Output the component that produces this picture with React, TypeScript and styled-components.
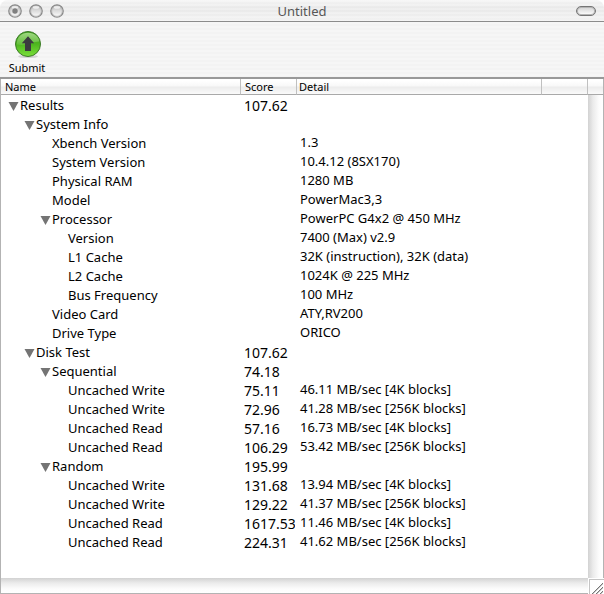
import React, { useState } from "react";
import styled, { createGlobalStyle } from "styled-components";

const GlobalStyle = createGlobalStyle`
  * { box-sizing: border-box; }
  html, body { margin: 0; background: #fff; }
  body, button { font-family: "Noto Sans", "Open Sans", sans-serif; color: #000; }
`;

const Window = styled.main`
  display: flex;
  flex-direction: column;
  min-height: 100vh;
  overflow: hidden;
  border-radius: 8px 8px 0 0;
  background: #fff;
`;

const TitleBar = styled.header`
  display: grid;
  grid-template-columns: 80px 1fr 80px;
  align-items: center;
  height: 22px;
  padding: 0 8px;
  border-bottom: 1px solid #8c8c8c;
  background:
    repeating-linear-gradient(rgba(255, 255, 255, 0.25) 0 2px, transparent 2px 4px),
    linear-gradient(#f4f4f4, #e9e9e9 40%, #f2f2f2);
`;

const Title = styled.h1`
  margin: 0;
  font-size: 13px;
  line-height: 20px;
  font-weight: 400;
  text-align: center;
  color: #575757;
`;

const Lights = styled.div`
  display: flex;
  gap: 7px;
`;

const Light = styled.button`
  width: 14px;
  height: 14px;
  padding: 0;
  border: 0;
  background: none;
  svg { display: block; }
`;

const ToolbarToggle = styled.button`
  justify-self: end;
  width: 20px;
  height: 10px;
  padding: 0;
  border: 1px solid #757575;
  border-radius: 5px;
  background: linear-gradient(#d2d2d2, #fff);
  box-shadow: inset 0 0 0 1px #b5b5b5;
`;

const Toolbar = styled.div`
  display: flex;
  height: 57px;
  padding: 6px 8px 0;
  border-bottom: 2px solid #999;
  background: repeating-linear-gradient(#f6f6f6 0 2px, #f3f3f3 2px 4px);
`;

const SubmitButton = styled.button`
  display: flex;
  flex-direction: column;
  align-items: center;
  width: 38px;
  padding: 0;
  border: 0;
  background: none;
  font-size: 11px;
  line-height: 16px;
  svg { display: block; }
`;

const Content = styled.div`
  display: grid;
  flex: 1;
  grid-template-columns: minmax(0, 1fr) 16px;
  grid-template-rows: 16px 1fr 16px;
  border-left: 1px solid #b3b3b3;
`;

const TableArea = styled.div`
  grid-row: 1 / 3;
`;

const ResultsTable = styled.table`
  width: 100%;
  table-layout: fixed;
  border-collapse: separate;
  border-spacing: 0;
`;

const Column = styled.col<{ $width?: number }>`
  width: ${(p) => (p.$width ? `${p.$width}px` : "auto")};
`;

const headerFill = "linear-gradient(#fff 0 2px, #f8f8f8 7px, #ececec 8px, #fafafa)";

const HeadCell = styled.th<{ $inset?: number }>`
  height: 16px;
  padding: 0 0 0 ${(p) => p.$inset ?? 2}px;
  border-right: 1px solid #c0c0c0;
  border-bottom: 1px solid #a9a9a9;
  background: ${headerFill};
  font-size: 11px;
  line-height: 15px;
  font-weight: 400;
  text-align: left;
`;

const HeadCap = styled.div`
  border-right: 1px solid #b3b3b3;
  border-bottom: 1px solid #a9a9a9;
  background: ${headerFill};
`;

const NameCell = styled.td<{ $depth: number }>`
  height: 19px;
  padding: 2px 0 0 ${(p) => 7 + p.$depth * 16}px;
  font-size: 13px;
  line-height: 17px;
  white-space: nowrap;
`;

const NameLabel = styled.div`
  display: grid;
  grid-template-columns: 12px 1fr;
  align-items: center;
`;

const Disclosure = styled.button<{ $open: boolean }>`
  grid-column: 1;
  display: block;
  width: 12px;
  height: 12px;
  padding: 0;
  border: 0;
  background: none;
  transform: ${(p) => (p.$open ? "none" : "rotate(-90deg)")};
  svg { display: block; }
`;

const NameText = styled.span`
  grid-column: 2;
`;

const ScoreCell = styled.td`
  padding: 2px 2px 0 3px;
  font-size: 14px;
  line-height: 17px;
  white-space: nowrap;
`;

const ScoreText = styled.div`
  overflow: hidden;
`;

const DetailCell = styled.td`
  padding: 0 0 0 3px;
  font-size: 13px;
  line-height: 19px;
  white-space: nowrap;
`;

const VerticalTrack = styled.div`
  border-right: 1px solid #b3b3b3;
  background: linear-gradient(to right, #d2d2d2, #ebebeb 5px, #fcfcfc 11px, #fff);
`;

const HorizontalTrack = styled.div`
  border-bottom: 1px solid #b3b3b3;
  background: linear-gradient(#d2d2d2, #ebebeb 5px, #fcfcfc 11px, #fff);
`;

const ResizeCorner = styled.div`
  margin: 1px 0 0 1px;
  border-top: 1px solid #c4c4c4;
  border-left: 1px solid #c4c4c4;
  background: #fff;
  svg { display: block; }
`;

type Entry = { depth: number; name: string; score?: string; detail?: string; group?: boolean };

const entries: Entry[] = [
  { depth: 0, name: "Results", score: "107.62", group: true },
  { depth: 1, name: "System Info", group: true },
  { depth: 2, name: "Xbench Version", detail: "1.3" },
  { depth: 2, name: "System Version", detail: "10.4.12 (8SX170)" },
  { depth: 2, name: "Physical RAM", detail: "1280 MB" },
  { depth: 2, name: "Model", detail: "PowerMac3,3" },
  { depth: 2, name: "Processor", detail: "PowerPC G4x2 @ 450 MHz", group: true },
  { depth: 3, name: "Version", detail: "7400 (Max) v2.9" },
  { depth: 3, name: "L1 Cache", detail: "32K (instruction), 32K (data)" },
  { depth: 3, name: "L2 Cache", detail: "1024K @ 225 MHz" },
  { depth: 3, name: "Bus Frequency", detail: "100 MHz" },
  { depth: 2, name: "Video Card", detail: "ATY,RV200" },
  { depth: 2, name: "Drive Type", detail: "ORICO" },
  { depth: 1, name: "Disk Test", score: "107.62", group: true },
  { depth: 2, name: "Sequential", score: "74.18", group: true },
  { depth: 3, name: "Uncached Write", score: "75.11", detail: "46.11 MB/sec [4K blocks]" },
  { depth: 3, name: "Uncached Write", score: "72.96", detail: "41.28 MB/sec [256K blocks]" },
  { depth: 3, name: "Uncached Read", score: "57.16", detail: "16.73 MB/sec [4K blocks]" },
  { depth: 3, name: "Uncached Read", score: "106.29", detail: "53.42 MB/sec [256K blocks]" },
  { depth: 2, name: "Random", score: "195.99", group: true },
  { depth: 3, name: "Uncached Write", score: "131.68", detail: "13.94 MB/sec [4K blocks]" },
  { depth: 3, name: "Uncached Write", score: "129.22", detail: "41.37 MB/sec [256K blocks]" },
  { depth: 3, name: "Uncached Read", score: "1617.53", detail: "11.46 MB/sec [4K blocks]" },
  { depth: 3, name: "Uncached Read", score: "224.31", detail: "41.62 MB/sec [256K blocks]" },
];

function LightIcon({ dot }: { dot?: boolean }) {
  return (
    <svg width="14" height="14" viewBox="0 0 14 14" aria-hidden="true">
      <defs>
        <linearGradient id="lightFill" x1="0" y1="0" x2="0" y2="1">
          <stop offset="0" stopColor="#a8a8a8" />
          <stop offset="0.4" stopColor="#d6d6d6" />
          <stop offset="1" stopColor="#fff" />
        </linearGradient>
      </defs>
      <circle cx="7" cy="7" r="6.2" fill="url(#lightFill)" stroke="#8a8a8a" strokeWidth="1.3" />
      <circle cx="7" cy="7" r="5.2" fill="none" stroke="#b4b4b4" strokeWidth="0.8" opacity="0.7" />
      <ellipse cx="7" cy="3.4" rx="3.2" ry="1.4" fill="#fff" opacity="0.7" />
      {dot && <circle cx="7" cy="7" r="2.7" fill="#808080" />}
    </svg>
  );
}

function SubmitIcon() {
  return (
    <svg width="32" height="32" viewBox="0 0 32 32" aria-hidden="true">
      <defs>
        <linearGradient id="green" x1="0" y1="0" x2="0" y2="1">
          <stop offset="0" stopColor="#3f9f1c" />
          <stop offset="0.5" stopColor="#4db51f" />
          <stop offset="1" stopColor="#7be03a" />
        </linearGradient>
        <linearGradient id="gloss" x1="0" y1="0" x2="0" y2="1">
          <stop offset="0" stopColor="#b5e59a" />
          <stop offset="1" stopColor="#67bd3f" />
        </linearGradient>
      </defs>
      <ellipse cx="17" cy="28.5" rx="10" ry="1.6" fill="#000" opacity="0.13" />
      <circle cx="17" cy="16" r="12.5" fill="url(#green)" stroke="#3c7a28" strokeWidth="1" />
      <path d="M5.8 16.5C5.8 9 10.5 4.8 17 4.8S28.2 9 28.2 13.5C22 13.5 15 18.5 5.8 16.5Z" fill="url(#gloss)" opacity="0.8" />
      <path d="M17 8.2L23.2 15.2H20V23H14V15.2H10.8Z" fill="#3b3b3f" />
    </svg>
  );
}

function visibleEntries(closed: Set<number>) {
  let hiddenBelow = Infinity;
  return entries
    .map((entry, index) => ({ entry, index }))
    .filter(({ entry, index }) => {
      if (entry.depth > hiddenBelow) return false;
      hiddenBelow = closed.has(index) ? entry.depth : Infinity;
      return true;
    });
}

export default function App() {
  const [closed, setClosed] = useState<Set<number>>(new Set());

  const toggle = (index: number) =>
    setClosed((previous) => {
      const next = new Set(previous);
      if (!next.delete(index)) next.add(index);
      return next;
    });

  return (
    <>
      <GlobalStyle />
      <Window>
        <TitleBar>
          <Lights>
            <Light aria-label="Close"><LightIcon dot /></Light>
            <Light aria-label="Minimize"><LightIcon /></Light>
            <Light aria-label="Zoom"><LightIcon /></Light>
          </Lights>
          <Title>Untitled</Title>
          <ToolbarToggle aria-label="Toggle toolbar" />
        </TitleBar>
        <Toolbar>
          <SubmitButton>
            <SubmitIcon />
            Submit
          </SubmitButton>
        </Toolbar>
        <Content>
          <TableArea>
            <ResultsTable>
              <colgroup>
                <Column $width={240} />
                <Column $width={56} />
                <Column />
                <Column $width={46} />
              </colgroup>
              <thead>
                <tr>
                  <HeadCell $inset={4}>Name</HeadCell>
                  <HeadCell $inset={4}>Score</HeadCell>
                  <HeadCell>Detail</HeadCell>
                  <HeadCell />
                </tr>
              </thead>
              <tbody>
                {visibleEntries(closed).map(({ entry, index }) => (
                  <tr key={index}>
                    <NameCell $depth={entry.depth}>
                      <NameLabel>
                        {entry.group && (
                          <Disclosure
                            $open={!closed.has(index)}
                            aria-expanded={!closed.has(index)}
                            aria-label={entry.name}
                            onClick={() => toggle(index)}
                          >
                            <svg width="12" height="12" viewBox="0 0 12 12" aria-hidden="true">
                              <path d="M0.5 2H10.5L5.5 11Z" fill="#747474" />
                            </svg>
                          </Disclosure>
                        )}
                        <NameText>{entry.name}</NameText>
                      </NameLabel>
                    </NameCell>
                    <ScoreCell><ScoreText>{entry.score}</ScoreText></ScoreCell>
                    <DetailCell colSpan={2}>{entry.detail}</DetailCell>
                  </tr>
                ))}
              </tbody>
            </ResultsTable>
          </TableArea>
          <HeadCap />
          <VerticalTrack />
          <HorizontalTrack />
          <ResizeCorner>
            <svg width="14" height="14" viewBox="0 0 14 14" aria-hidden="true">
              <path d="M2 14L13 3M6 14L13 7M10 14L13 11" stroke="#777" strokeWidth="1" />
              <path d="M3 14L13 4M7 14L13 8M11 14L13 12" stroke="#c8c8c8" strokeWidth="1" />
            </svg>
          </ResizeCorner>
        </Content>
      </Window>
    </>
  );
}
